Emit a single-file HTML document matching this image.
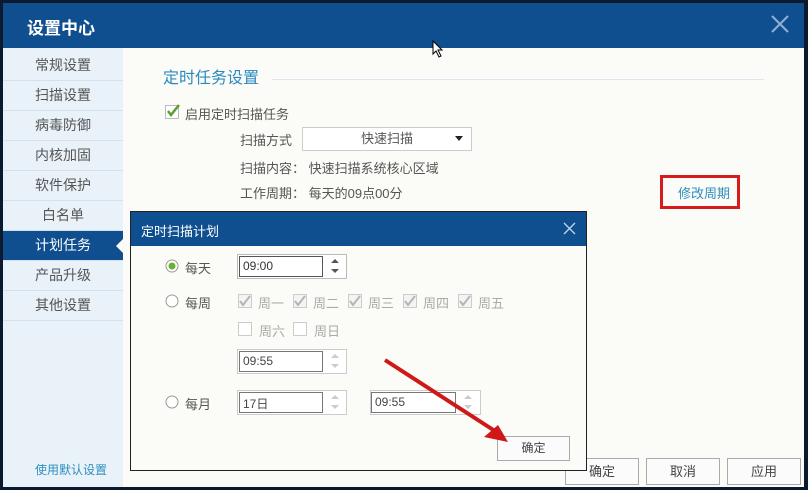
<!DOCTYPE html>
<html><head><meta charset="utf-8"><style>
*{margin:0;padding:0;box-sizing:border-box}
body{width:808px;height:490px;overflow:hidden;background:#0b1a2e;font-family:"Liberation Sans","Noto Sans CJK SC",sans-serif;font-size:12px;color:#555;position:relative}
.a{position:absolute}
.win{left:3px;top:3px;width:801px;height:484px;background:#fbfbf7}
.tb{left:3px;top:3px;width:801px;height:45px;background:#0f4e8f;color:#fff;font-size:17px;font-weight:bold;padding:11px 24px}
.side{left:3px;top:48px;width:120px;height:439px;background:#e9f2f9}
.it{position:absolute;left:0;width:120px;height:30px;line-height:29px;text-align:center;font-size:14px;color:#555;border-bottom:1px solid #d4e0ea}
.sel{background:#0f4e8f;color:#fff}
.cb{width:14px;height:14px;border:1px solid #bbb;background:#fff}
.inp{border:1px solid #ccc;background:#fff}
.btn{border:1px solid #aaa;background:#fbfbfb;text-align:center;font-size:13px;color:#444}
.wd{position:absolute;top:293px;font-size:13px;color:#aaa}
</style></head><body>
<div class="a win"></div>
<div class="a tb">设置中心</div>
<svg class="a" style="left:771px;top:15px" width="18" height="18"><path d="M1 1L17 17M17 1L1 17" stroke="#8fb0d6" stroke-width="2"/></svg>
<svg class="a" style="left:432px;top:40px" width="12" height="18"><path d="M1 1L1 14L4 11L7 17L9 16L6 10L10 10Z" fill="#fff" stroke="#000"/></svg>
<div class="a side">
<div class="it" style="top:3px">常规设置</div>
<div class="it" style="top:33px">扫描设置</div>
<div class="it" style="top:63px">病毒防御</div>
<div class="it" style="top:93px">内核加固</div>
<div class="it" style="top:123px">软件保护</div>
<div class="it" style="top:153px">白名单</div>
<div class="it sel" style="top:183px">计划任务</div>
<div class="it" style="top:213px">产品升级</div>
<div class="it" style="top:243px">其他设置</div>
<div class="a" style="left:32px;top:413px;color:#2d8fc0;font-size:12px">使用默认设置</div>
</div>
<svg class="a" style="left:116px;top:238px" width="8" height="16"><path d="M8 0L0 8L8 16Z" fill="#fbfbf7"/></svg>
<div class="a" style="left:163px;top:64px;font-size:16px;color:#2a8ac0">定时任务设置</div>
<div class="a" style="left:272px;top:79px;width:492px;height:1px;background:#dde6ee"></div>
<div class="a cb" style="left:165px;top:105px"></div>
<svg class="a" style="left:165px;top:103px" width="16" height="16"><path d="M3 8L6 12L14 2" stroke="#5aa02c" stroke-width="2.5" fill="none"/></svg>
<div class="a" style="left:185px;top:104px;font-size:13px">启用定时扫描任务</div>
<div class="a" style="left:240px;top:130px;font-size:13px">扫描方式</div>
<div class="a inp" style="left:302px;top:127px;width:170px;height:24px;text-align:center;line-height:22px;font-size:13px">快速扫描</div>
<svg class="a" style="left:455px;top:136px" width="8" height="5"><path d="M0 0L8 0L4 5Z" fill="#222"/></svg>
<div class="a" style="left:240px;top:158px;font-size:13px">扫描内容： 快速扫描系统核心区域</div>
<div class="a" style="left:240px;top:183px;font-size:13px">工作周期： 每天的09点00分</div>
<div class="a" style="left:660px;top:175px;width:80px;height:34px;border:3px solid #d41c1c"></div>
<div class="a" style="left:678px;top:183px;font-size:13px;color:#2d8fc0">修改周期</div>
<div class="a btn" style="left:565px;top:458px;width:74px;height:27px;line-height:25px">确定</div>
<div class="a btn" style="left:646px;top:458px;width:74px;height:27px;line-height:25px">取消</div>
<div class="a btn" style="left:727px;top:458px;width:74px;height:27px;line-height:25px">应用</div>
<div class="a" style="left:130px;top:211px;width:457px;height:260px;background:#fbfbf7;border:1px solid #222"></div>
<div class="a" style="left:131px;top:212px;width:455px;height:34px;background:#0f4e8f;color:#fff;font-size:13px;padding:9px 10px">定时扫描计划</div>
<svg class="a" style="left:563px;top:222px" width="13" height="13"><path d="M1 1L12 12M12 1L1 12" stroke="#c5d6ea" stroke-width="1.3"/></svg>
<svg class="a" style="left:165px;top:259px" width="14" height="14"><circle cx="7" cy="7" r="6" fill="#fff" stroke="#999"/><circle cx="7" cy="7" r="3.5" fill="#6cb02f"/></svg>
<div class="a" style="left:185px;top:258px;font-size:13px">每天</div>
<div class="a inp" style="left:237px;top:254px;width:110px;height:25px;border-color:#bbb"></div>
<div class="a" style="left:239px;top:256px;width:84px;height:21px;border:1px solid #555;background:#fff;padding:2px 3px;font-size:12px;color:#333">09:00</div>
<svg class="a" style="left:330px;top:258px" width="10" height="16"><path d="M1 5L5 1L9 5Z M1 11L5 15L9 11Z" fill="#555"/></svg>
<svg class="a" style="left:165px;top:294px" width="14" height="14"><circle cx="7" cy="7" r="6" fill="#fff" stroke="#999"/></svg>
<div class="a" style="left:185px;top:293px;font-size:13px">每周</div>
<svg class="a" style="left:237px;top:293px" width="240" height="16">
<g fill="#f4f4f4" stroke="#ccc"><rect x="1.5" y="1.5" width="13" height="13"/><rect x="56.5" y="1.5" width="13" height="13"/><rect x="111.5" y="1.5" width="13" height="13"/><rect x="166.5" y="1.5" width="13" height="13"/><rect x="221.5" y="1.5" width="13" height="13"/></g>
<g stroke="#b5b5b5" stroke-width="2" fill="none"><path d="M3 8L6 12L13 3"/><path d="M58 8L61 12L68 3"/><path d="M113 8L116 12L123 3"/><path d="M168 8L171 12L178 3"/><path d="M223 8L226 12L233 3"/></g></svg>
<div class="wd" style="left:258px">周一</div><div class="wd" style="left:313px">周二</div><div class="wd" style="left:368px">周三</div><div class="wd" style="left:423px">周四</div><div class="wd" style="left:478px">周五</div>
<div class="a cb" style="left:238px;top:322px;border-color:#ccc"></div><div class="a" style="left:259px;top:321px;font-size:13px;color:#aaa">周六</div>
<div class="a cb" style="left:293px;top:322px;border-color:#ccc"></div><div class="a" style="left:314px;top:321px;font-size:13px;color:#aaa">周日</div>
<div class="a inp" style="left:237px;top:349px;width:110px;height:25px"></div>
<div class="a" style="left:239px;top:351px;width:84px;height:21px;border:1px solid #777;background:#fff;padding:2px 3px;color:#444">09:55</div>
<svg class="a" style="left:330px;top:353px" width="10" height="16"><path d="M1 5L5 1L9 5Z M1 11L5 15L9 11Z" fill="#ccc"/></svg>
<svg class="a" style="left:165px;top:395px" width="14" height="14"><circle cx="7" cy="7" r="6" fill="#fff" stroke="#999"/></svg>
<div class="a" style="left:185px;top:394px;font-size:13px">每月</div>
<div class="a inp" style="left:237px;top:390px;width:110px;height:25px"></div>
<div class="a" style="left:239px;top:392px;width:84px;height:21px;border:1px solid #777;background:#fff;padding:2px 3px;color:#444">17日</div>
<svg class="a" style="left:330px;top:394px" width="10" height="16"><path d="M1 5L5 1L9 5Z M1 11L5 15L9 11Z" fill="#ccc"/></svg>
<div class="a inp" style="left:370px;top:390px;width:111px;height:25px"></div>
<div class="a" style="left:371px;top:392px;width:85px;height:21px;border:1px solid #777;background:#fff;padding:2px 3px;color:#444">09:55</div>
<svg class="a" style="left:463px;top:394px" width="10" height="16"><path d="M1 5L5 1L9 5Z M1 11L5 15L9 11Z" fill="#ccc"/></svg>
<div class="a btn" style="left:497px;top:436px;width:73px;height:25px;line-height:23px;font-size:12px">确定</div>
<svg class="a" style="left:380px;top:355px" width="140" height="95"><path d="M5 5L118 78" stroke="#d01818" stroke-width="4"/><path d="M128 87L104 82L118 70Z" fill="#d01818"/></svg>
</body></html>
